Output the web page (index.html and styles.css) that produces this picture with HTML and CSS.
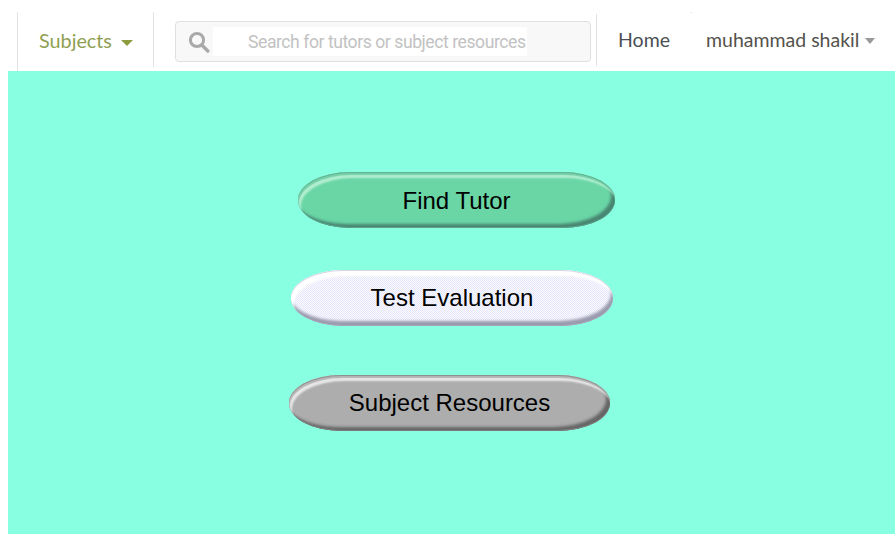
FILE: index.html
```html
<!DOCTYPE html>
<html lang="en">
<head>
<meta charset="utf-8">
<title>Subjects</title>
<link rel="stylesheet" href="styles.css">
</head>
<body>
<header class="topbar">
  <a class="subjects" href="#"><span>Subjects</span><i class="caret caret-green"></i></a>
  <form class="search">
    <svg class="search-icon" width="22" height="22" viewBox="0 0 22 22" aria-hidden="true"><circle cx="9" cy="9" r="6.6" fill="none" stroke="#a9a9a9" stroke-width="3"/><path d="M13.8 14l6 6" stroke="#a9a9a9" stroke-width="3.4" stroke-linecap="round"/></svg>
    <div class="search-field">Search for tutors or subject resources</div>
  </form>
  <nav class="links">
    <a class="home" href="#">Home</a>
    <a class="user" href="#"><span>muhammad shakil</span><i class="caret caret-grey"></i></a>
  </nav>
  <i class="speck"></i>
</header>
<main class="panel">
  <a class="pill pill-green" href="#">Find Tutor</a>
  <a class="pill pill-lilac" href="#">Test Evaluation</a>
  <a class="pill pill-grey" href="#">Subject Resources</a>
</main>
</body>
</html>
```
FILE: styles.css
```css
* { box-sizing: border-box; }
html, body { height: 100%; }
body {
  margin: 0;
  background: #fff;
  font-family: "Lato", "Liberation Sans", sans-serif;
  overflow: hidden;
}
a { text-decoration: none; }

.topbar {
  position: relative;
  display: flex;
  align-items: flex-start;
  height: 71px;
  padding-left: 17px;
}
.subjects {
  display: flex;
  align-items: center;
  gap: 9px;
  width: 137px;
  height: 55px;
  margin-top: 12px;
  padding: 1px 0 0 21px;
  border-left: 1px solid #e2e2e2;
  border-right: 1px solid #e2e2e2;
  font-size: 19.8px;
  color: #8f9f52;
}
.subjects::before {
  content: "";
  position: absolute;
  left: 17px;
  top: 67px;
  width: 1px;
  height: 4px;
  background: #e2e2e2;
}
.caret {
  display: block;
  width: 0;
  height: 0;
  margin-top: 6px;
  border-left: 6px solid transparent;
  border-right: 6px solid transparent;
}
.caret-green { border-top: 6px solid #8c9c3e; }
.caret-grey { border-left-width: 5.5px; border-right-width: 5.5px; border-top: 6px solid #999; margin-top: 2px; }

.search {
  display: flex;
  align-items: center;
  width: 416px;
  height: 41px;
  margin: 21px 0 0 21px;
  padding-left: 12px;
  background: #f8f8f8;
  border: 1px solid #e0e0e0;
  border-radius: 4px;
}
.search-icon { flex: none; margin-right: 3px; margin-top: 1px; }
.search-field {
  width: 314px;
  height: 29px;
  padding-left: 35px;
  background: #fff;
  font: 17.6px/30px "Roboto", "Liberation Sans", sans-serif;
  letter-spacing: -0.45px;
  color: #c2c2c2;
  white-space: nowrap;
}

.links {
  display: flex;
  align-items: center;
  height: 52px;
  margin: 14px 0 0 5px;
  padding: 0 0 1px 21px;
  border-left: 1px solid #e2e2e2;
  font-size: 19.5px;
  color: #4a4a4a;
}
.home { color: #4a4f55; margin-right: 36px; }
.user { display: flex; align-items: center; gap: 6px; color: #54524c; white-space: nowrap; }
.speck {
  position: absolute;
  left: 691px;
  top: 12px;
  width: 1px;
  height: 1px;
  background: #d8d8d8;
}

.panel {
  display: flex;
  flex-direction: column;
  align-items: flex-start;
  height: 463px;
  margin-left: 8px;
  padding-top: 101px;
  background: #88ffe0;
}
.pill {
  display: block;
  height: 56px;
  border-radius: 52px / 28px;
  font: 24px/56px "Liberation Sans", sans-serif;
  color: #000;
  text-align: center;
}
.pill-green {
  width: 317px;
  margin-left: 290px;
  padding-top: 1px;
  background: #6ad6a6;
  box-shadow:
    inset 0 1px 0 #62b394,
    inset 1px 3px 1px #74cfa8,
    inset 3px 6px 2px #b2efd1,
    inset 0 -1px 0 #5d9f87,
    inset -4px -4px 3px #478571;
}
.pill-lilac {
  width: 322px;
  margin: 42px 0 0 283px;
  background: repeating-conic-gradient(#e6e6fb 0 25%, #fbfbff 0 50%) 0 0 / 2px 2px;
  box-shadow:
    inset 0 1px 0 #d6d6e6,
    inset 3px 6px 2px #ffffff,
    inset 0 -1px 0 #a5a5b8,
    inset -2px -5px 3px #9a9aae;
}
.pill-grey {
  width: 321px;
  margin: 49px 0 0 281px;
  background: #adadad;
  box-shadow:
    inset 0 1px 0 #8f8f8f,
    inset 1px 3px 1px #b4b4b4,
    inset 3px 6px 2px #e8e8e8,
    inset 0 -1px 0 #7d7d7d,
    inset -4px -4px 3px #666;
}
```
